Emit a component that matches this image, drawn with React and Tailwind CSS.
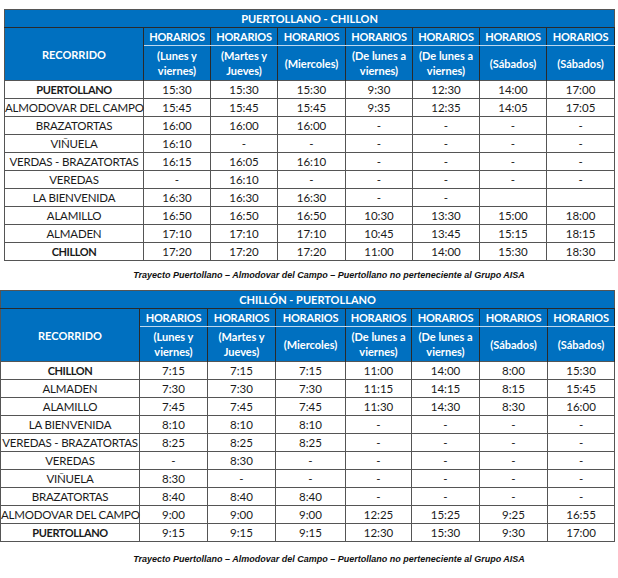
const subtitles = [
  ['(Lunes y', 'viernes)'],
  ['(Martes y', 'Jueves)'],
  ['(Miercoles)'],
  ['(De lunes a', 'viernes)'],
  ['(De lunes a', 'viernes)'],
  ['(Sábados)'],
  ['(Sábados)'],
];

const ida = [
  ['PUERTOLLANO', true, '15:30', '15:30', '15:30', '9:30', '12:30', '14:00', '17:00'],
  ['ALMODOVAR DEL CAMPO', false, '15:45', '15:45', '15:45', '9:35', '12:35', '14:05', '17:05'],
  ['BRAZATORTAS', false, '16:00', '16:00', '16:00', '-', '-', '-', '-'],
  ['VIÑUELA', false, '16:10', '-', '-', '-', '-', '-', '-'],
  ['VERDAS - BRAZATORTAS', false, '16:15', '16:05', '16:10', '-', '-', '-', '-'],
  ['VEREDAS', false, '-', '16:10', '-', '-', '-', '-', '-'],
  ['LA BIENVENIDA', false, '16:30', '16:30', '16:30', '-', '-', '', ''],
  ['ALAMILLO', false, '16:50', '16:50', '16:50', '10:30', '13:30', '15:00', '18:00'],
  ['ALMADEN', false, '17:10', '17:10', '17:10', '10:45', '13:45', '15:15', '18:15'],
  ['CHILLON', true, '17:20', '17:20', '17:20', '11:00', '14:00', '15:30', '18:30'],
];

const vuelta = [
  ['CHILLON', true, '7:15', '7:15', '7:15', '11:00', '14:00', '8:00', '15:30'],
  ['ALMADEN', false, '7:30', '7:30', '7:30', '11:15', '14:15', '8:15', '15:45'],
  ['ALAMILLO', false, '7:45', '7:45', '7:45', '11:30', '14:30', '8:30', '16:00'],
  ['LA BIENVENIDA', false, '8:10', '8:10', '8:10', '-', '-', '-', '-'],
  ['VEREDAS - BRAZATORTAS', false, '8:25', '8:25', '8:25', '-', '-', '-', '-'],
  ['VEREDAS', false, '-', '8:30', '-', '-', '-', '-', '-'],
  ['VIÑUELA', false, '8:30', '-', '-', '-', '-', '-', '-'],
  ['BRAZATORTAS', false, '8:40', '8:40', '8:40', '-', '-', '-', '-'],
  ['ALMODOVAR DEL CAMPO', false, '9:00', '9:00', '9:00', '12:25', '15:25', '9:25', '16:55'],
  ['PUERTOLLANO', true, '9:15', '9:15', '9:15', '12:30', '15:30', '9:30', '17:00'],
];

function Horario({ title, rows, widths }) {
  return (
    <table className="table-fixed border-collapse border border-[#555] text-[11.5px] leading-none text-[#1a1a1a]" style={{ width: widths.reduce((a, b) => a + b, 0) }}>
      <colgroup>
        {widths.map((w, i) => (
          <col key={i} style={{ width: w }} />
        ))}
      </colgroup>
      <thead className="bg-[#0070c0] text-white font-bold text-[11px]">
        <tr className="h-[18px]">
          <th colSpan={8} className="border-b border-[#2a2a2a] font-bold">{title}</th>
        </tr>
        <tr className="h-[18px]">
          <th rowSpan={2} className="border-r border-[#2a2a2a] font-bold">RECORRIDO</th>
          {subtitles.map((_, i) => (
            <th key={i} className="border-r border-b border-r-[#2a2a2a] border-b-[#bcd7ee] font-bold tracking-[-0.2px]">HORARIOS</th>
          ))}
        </tr>
        <tr className="h-[35px]">
          {subtitles.map((lines, i) => (
            <th key={i} className="border-r border-[#2a2a2a] font-bold leading-[15px]">
              {lines.map((l, j) => (
                <div key={j}>{l}</div>
              ))}
            </th>
          ))}
        </tr>
      </thead>
      <tbody>
        {rows.map(([name, bold, ...times], i) => (
          <tr key={i} className="h-[18px]">
            <td className={`border border-[#555] text-center whitespace-nowrap ${bold ? 'font-bold text-[11px] tracking-[-0.4px]' : 'tracking-[-0.2px]'}`}>{name}</td>
            {times.map((t, j) => (
              <td key={j} className="border border-[#555] text-center">{t}</td>
            ))}
          </tr>
        ))}
      </tbody>
    </table>
  );
}

function Nota() {
  return (
    <p className="text-center pl-10 text-[9px] leading-[11px] font-bold italic text-[#111] font-['Liberation_Sans',Arial,sans-serif]">
      Trayecto Puertollano – Almodovar del Campo – Puertollano no perteneciente al Grupo AISA
    </p>
  );
}

export default function App() {
  return (
    <div className="w-[618px] h-[578px] bg-white font-['Lato','Open_Sans',sans-serif] overflow-hidden">
      <div className="pt-[9px] pl-[4px]">
        <Horario title="PUERTOLLANO - CHILLON" rows={ida} widths={[139, 67, 67, 68, 67, 67, 67, 68]} />
      </div>
      <div className="mt-[9px]">
        <Nota />
      </div>
      <div className="mt-[9px]">
        <Horario title="CHILLÓN - PUERTOLLANO" rows={vuelta} widths={[139, 68, 68, 70, 66, 68, 68, 67]} />
      </div>
      <div className="mt-[12px]">
        <Nota />
      </div>
    </div>
  );
}
